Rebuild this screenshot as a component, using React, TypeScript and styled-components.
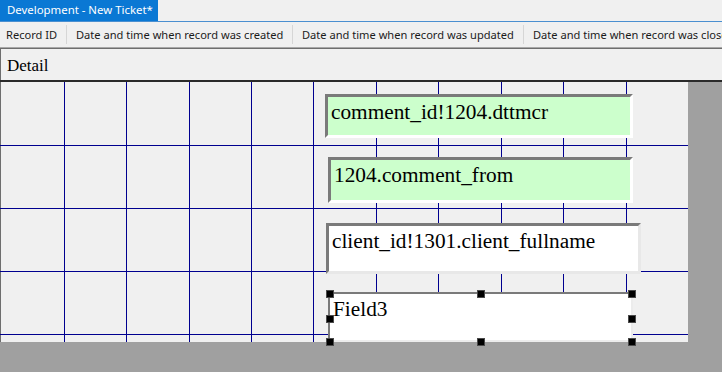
import styled, { createGlobalStyle } from 'styled-components';

// page reset
const GlobalStyle = createGlobalStyle`
  html, body {
    margin: 0;
    padding: 0;
    background: #f0f0f0;
  }
`;

const Frame = styled.div`
  width: 722px;
  height: 372px;
  display: flex;
  flex-direction: column;
  overflow: hidden;
  background: #f0f0f0;
  font-family: 'Noto Sans', 'Open Sans', sans-serif;
`;

const TitleStrip = styled.div`
  height: 21px;
  display: flex;
  align-items: stretch;
  border-bottom: 1px solid #4a8fd0;
  flex-shrink: 0;
`;

const Tab = styled.div`
  width: 158px;
  background: #0a78d4;
  color: #ffffff;
  font-size: 11.4px;
  line-height: 20px;
  padding-left: 7px;
  box-sizing: border-box;
  white-space: nowrap;
  overflow: hidden;
`;

const Toolbar = styled.div`
  height: 25px;
  display: flex;
  align-items: center;
  flex-shrink: 0;
  white-space: nowrap;
  overflow: hidden;
`;

const ToolItem = styled.div<{ $w?: number; $first?: boolean }>`
  flex-shrink: 0;
  width: ${(p) => (p.$w ? `${p.$w}px` : 'auto')};
  height: 19px;
  box-sizing: border-box;
  padding-left: ${(p) => (p.$first ? 6 : 9)}px;
  border-right: ${(p) => (p.$w ? '1px solid #d6d6d6' : 'none')};
  font-size: 11.1px;
  line-height: 19px;
  color: #1b1b1b;
`;

const Divider = styled.div`
  height: 0;
  border-top: 1px solid #a8a8a8;
  border-bottom: 1px solid #6e6e6e;
  flex-shrink: 0;
`;

const SectionHeader = styled.div`
  height: 31px;
  box-sizing: border-box;
  border-left: 1px solid #6e6e6e;
  padding: 2px 0 0 6px;
  font-family: 'Liberation Serif', 'Times New Roman', serif;
  font-size: 17px;
  line-height: 29px;
  color: #000;
  flex-shrink: 0;
`;

const SectionRule = styled.div`
  height: 2px;
  background: #2a2a2a;
  flex-shrink: 0;
`;

const Workspace = styled.div`
  flex: 1;
  background: #a0a0a0;
  display: flex;
  align-items: flex-start;
`;

const Canvas = styled.div`
  position: relative;
  width: 688px;
  height: 260px;
  background: #f0f0f0;
  box-shadow: inset 1px 0 0 #6e6e6e;
  flex-shrink: 0;
`;

const GridLayer = styled.svg`
  position: absolute;
  left: 0;
  top: 0;
  display: block;
`;

const Field = styled.div<{ $bg: string; $lo: string; $bw: number }>`
  position: absolute;
  box-sizing: border-box;
  background: ${(p) => p.$bg};
  border-style: solid;
  border-width: ${(p) => p.$bw}px;
  border-color: #7a7a7a ${(p) => p.$lo} ${(p) => p.$lo} #7a7a7a;
  padding: 3px 3px 0 3px;
  font-family: 'Liberation Serif', 'Times New Roman', serif;
  font-size: 21.3px;
  line-height: 24px;
  color: #000;
  white-space: nowrap;
`;

const Handle = styled.div`
  position: absolute;
  width: 8px;
  height: 8px;
  box-sizing: border-box;
  background: #000;
  border: 1px solid #4a4a4a;
`;

const vLines = [64, 126, 189, 251, 313, 376, 438, 501, 563, 626];
const hLines = [63, 126, 189, 252];

const fields = [
  { x: 325, y: 12, w: 308, h: 44, bg: '#ccffcc', lo: '#ffffff', bw: 3, text: 'comment_id!1204.dttmcr' },
  { x: 328, y: 75, w: 305, h: 46, bg: '#ccffcc', lo: '#ffffff', bw: 3, text: '1204.comment_from' },
  { x: 326, y: 141, w: 315, h: 51, bg: '#ffffff', lo: '#e8e8e8', bw: 3, text: 'client_id!1301.client_fullname' },
  { x: 328, y: 210, w: 305, h: 50, bg: '#ffffff', lo: '#ececec', bw: 2, text: 'Field3' },
];

const handleX = [326, 477, 628];
const handleY = [208, 233, 256];

const App = () => {
  return (
    <Frame>
      <GlobalStyle />
      <TitleStrip>
        <Tab>Development - New Ticket*</Tab>
      </TitleStrip>
      <Toolbar>
        <ToolItem $first $w={67}>Record ID</ToolItem>
        <ToolItem $w={226}>Date and time when record was created</ToolItem>
        <ToolItem $w={231}>Date and time when record was updated</ToolItem>
        <ToolItem>Date and time when record was closed</ToolItem>
      </Toolbar>
      <Divider />
      <SectionHeader>Detail</SectionHeader>
      <SectionRule />
      <Workspace>
        <Canvas>
          <GridLayer width={688} height={260}>
            {vLines.map((x) => (
              <rect key={`v${x}`} x={x} y={0} width={1} height={260} fill="#00008f" />
            ))}
            {hLines.map((y) => (
              <rect key={`h${y}`} x={0} y={y} width={688} height={1} fill="#00008f" />
            ))}
          </GridLayer>
          {fields.map((f) => (
            <Field
              key={f.text}
              $bg={f.bg}
              $lo={f.lo}
              $bw={f.bw}
              style={{ left: f.x, top: f.y, width: f.w, height: f.h }}
            >
              {f.text}
            </Field>
          ))}
          {handleY.map((y) =>
            handleX.map((x) =>
              x === 477 && y === 233 ? null : (
                <Handle key={`${x}-${y}`} style={{ left: x, top: y }} />
              )
            )
          )}
        </Canvas>
      </Workspace>
    </Frame>
  );
};

export default App;
